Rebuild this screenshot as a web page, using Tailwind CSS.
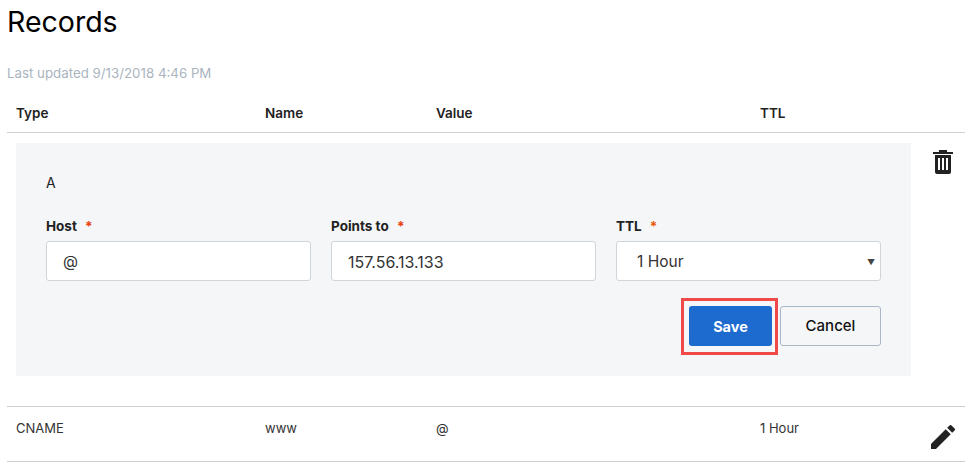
<!DOCTYPE html>
<html lang="en">
<head>
<meta charset="UTF-8">
<title>Records</title>
<script src="https://cdn.jsdelivr.net/npm/@tailwindcss/browser@4"></script>
</head>
<body class="bg-white h-[463px] w-[970px] overflow-hidden font-['Inter',sans-serif] text-[#111]">
  <div class="pl-[7px] pr-[5px]">
    <h1 class="text-[28.5px] leading-[38px] pt-[3px] text-black">Records</h1>
    <p class="mt-[23px] text-[13.3px] leading-[18px] text-[#aab5c0]">Last updated 9/13/2018 4:46 PM</p>
    <div class="mt-[12px] flex h-[39px] items-center border-b border-[#d0d0d0] pl-[9px] text-[13.5px] font-semibold text-[#222]">
      <div class="w-[249px]">Type</div>
      <div class="w-[171px]">Name</div>
      <div class="w-[324px]">Value</div>
      <div>TTL</div>
    </div>
    <div class="flex pt-[10px]">
      <div class="ml-[9px] h-[233px] w-[895px] bg-[#f5f6f8] px-[30px] pt-[30px]">
        <div class="text-[14px] leading-[20px] text-[#222]">A</div>
        <div class="mt-[24px] flex gap-[20px]">
          <div class="w-[265px]">
            <div class="text-[13.5px] font-bold leading-[18px] text-[#222]">Host <span class="ml-[5px] text-[#e8410c]">*</span></div>
            <div class="mt-[6px] flex h-[40px] items-center rounded-[3px] border border-[#d0d5da] bg-white px-[16px] pt-[2px] text-[15.5px] text-[#333]">@</div>
          </div>
          <div class="w-[265px]">
            <div class="text-[13.5px] font-bold leading-[18px] text-[#222]">Points to <span class="ml-[5px] text-[#e8410c]">*</span></div>
            <div class="mt-[6px] flex h-[40px] items-center rounded-[3px] border border-[#d0d5da] bg-white px-[16px] pt-[2px] text-[16px] text-[#333]">157.56.13.133</div>
          </div>
          <div class="w-[265px]">
            <div class="text-[13.5px] font-bold leading-[18px] text-[#222]">TTL <span class="ml-[5px] text-[#e8590c]">*</span></div>
            <div class="mt-[6px] flex h-[40px] items-center justify-between rounded-[3px] border border-[#d0d5da] bg-white pl-[20px] pr-[5px] pt-[2px] text-[15.5px] text-[#333]">1 Hour <span class="text-[8px] text-[#444]">▼</span></div>
          </div>
        </div>
        <div class="mt-[25px] flex justify-end gap-[8px]">
          <div class="flex h-[40px] w-[83px] items-center justify-center rounded-[3px] bg-[#1d6bcf] pt-[1px] text-[14.5px] font-bold text-white">Save</div>
          <div class="flex h-[40px] w-[101px] items-center justify-center rounded-[3px] border border-[#a9b8c6] pt-[1px] text-[15px] font-medium">Cancel</div>
        </div>
      </div>
      <svg class="ml-[22px] mt-[7px] h-[24px] w-[20px]" viewBox="0 0 20 24"><path fill="#222" d="M6 0h8v2h6v2H0V2h6zM2 5h16v17a2 2 0 0 1-2 2H4a2 2 0 0 1-2-2zm3 3v12h2V8zm4 0v12h2V8zm4 0v12h2V8z" fill-rule="evenodd"/></svg>
    </div>
    <div class="mt-[30px] flex h-[56px] border-y border-[#d0d0d0] pl-[9px] pt-[12px] text-[13px] leading-[18px] text-[#333]">
      <div class="w-[249px]">CNAME</div>
      <div class="w-[171px]">www</div>
      <div class="w-[324px]">@</div>
      <div class="w-[171px]">1 Hour</div>
      <svg class="mt-[6px] h-[24px] w-[24px]" viewBox="3 3 18 18"><path fill="#222" d="M3 17.25V21h3.75L17.81 9.94l-3.75-3.75L3 17.25zM20.71 7.04a1 1 0 0 0 0-1.41l-2.34-2.34a1 1 0 0 0-1.41 0l-1.83 1.83 3.75 3.75 1.83-1.83z"/></svg>
    </div>
  </div>
  <div class="absolute left-[681px] top-[298px] h-[57px] w-[97px] border-[3px] border-[#ef4a48]"></div>
</body>
</html>
